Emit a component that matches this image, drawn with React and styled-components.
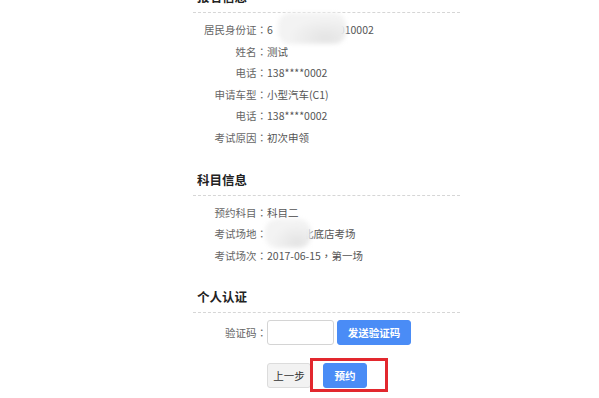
import React from 'react';
import styled, { createGlobalStyle } from 'styled-components';

const GlobalStyle = createGlobalStyle`
  html, body {
    margin: 0;
    padding: 0;
    background: #ffffff;
    overflow: hidden;
  }
  body {
    font-family: "Noto Sans CJK SC", "Noto Sans", "Liberation Sans", sans-serif;
  }
`;

const Page = styled.div`
  width: 267px;
  margin-left: 193px;
  margin-top: -13px;
`;

const Section = styled.section`
  & + & {
    margin-top: 21px;
  }
`;

const Heading = styled.h3`
  margin: 0;
  padding: 0 0 5px 4px;
  font-size: 12.5px;
  line-height: 20px;
  font-weight: bold;
  color: #222;
  border-bottom: 1px dashed #d6d6d6;
`;

const List = styled.div`
  padding-top: 6px;
`;

const Row = styled.div`
  display: grid;
  grid-template-columns: 74px 1fr;
  align-items: center;
  min-height: 21.6px;
  font-size: 10.5px;
  line-height: 21.6px;
`;

const Label = styled.span`
  text-align: right;
  color: #666;
  white-space: nowrap;
`;

// centred full-width punctuation, as in the original font
const Punct = styled.span`
  font-family: "Noto Sans CJK TC", "Noto Sans CJK SC", sans-serif;
`;

const Value = styled.span`
  position: relative;
  color: #555;
  white-space: nowrap;
  padding-left: ${({ $indent }) => $indent || 0}px;
`;

const Gap = styled.span`
  display: inline-block;
  width: ${({ $w }) => $w}px;
`;

const Blur = styled.span`
  position: absolute;
  left: ${({ $left }) => $left}px;
  top: ${({ $top }) => $top}px;
  width: ${({ $w }) => $w}px;
  height: ${({ $h }) => $h}px;
  border-radius: 12px;
  background:
    radial-gradient(ellipse at 70% 80%, #e4e4e4 0%, rgba(232, 232, 232, 0) 55%),
    #f3f3f3;
  filter: blur(2px);
`;

const AuthBody = styled.div`
  padding-top: 7px;
`;

const CodeRow = styled.div`
  display: grid;
  grid-template-columns: 74px 70px auto 1fr;
  align-items: center;
  font-size: 10.5px;
`;

const Input = styled.input`
  box-sizing: border-box;
  width: 67px;
  height: 25px;
  border: 1px solid #d4d4d4;
  border-radius: 3px;
  outline: none;
  padding: 0 4px;
`;

const Button = styled.button`
  box-sizing: border-box;
  height: 25px;
  width: ${({ $w }) => $w}px;
  padding: 0;
  border-radius: 3px;
  font-family: inherit;
  font-size: 10.5px;
  font-weight: ${({ $primary }) => ($primary ? 'bold' : 'normal')};
  cursor: pointer;
  border: 1px solid ${({ $primary }) => ($primary ? '#4a8cf6' : '#dcdcdc')};
  background: ${({ $primary }) => ($primary ? '#4a8cf6' : '#f2f2f2')};
  color: ${({ $primary }) => ($primary ? '#ffffff' : '#333333')};
`;

const Actions = styled.div`
  display: flex;
  align-items: center;
  margin-top: 13px;
  padding-left: 74px;
`;

const Highlight = styled.div`
  display: flex;
  align-items: center;
  margin-left: -1px;
  border: 3px solid #e2282e;
  padding: 2px 18px 1px 10px;
  background: #fff;
`;

const applyRows = [
  ['电话', '138****0002'],
  ['申请车型', '小型汽车(C1)'],
  ['电话', '138****0002'],
  ['考试原因', '初次申领'],
];

const FieldLabel = ({ children }) => (
  <Label>
    {children}
    <Punct>：</Punct>
  </Label>
);

export default function App() {
  return (
    <>
      <GlobalStyle />
      <Page>
        <Section>
          <Heading>报名信息</Heading>
          <List>
            <Row>
              <FieldLabel>居民身份证</FieldLabel>
              <Value>
                6<Gap $w={66} />010002
                <Blur $left={11} $top={-6} $w={68} $h={31} />
              </Value>
            </Row>
            <Row>
              <FieldLabel>姓名</FieldLabel>
              <Value>测试</Value>
            </Row>
            {applyRows.map(([label, value], i) => (
              <Row key={i}>
                <FieldLabel>{label}</FieldLabel>
                <Value>{value}</Value>
              </Row>
            ))}
          </List>
        </Section>

        <Section>
          <Heading>科目信息</Heading>
          <List>
            <Row>
              <FieldLabel>预约科目</FieldLabel>
              <Value>科目二</Value>
            </Row>
            <Row>
              <FieldLabel>考试场地</FieldLabel>
              <Value $indent={36}>
                北底店考场
                <Blur $left={-2} $top={-4} $w={46} $h={29} />
              </Value>
            </Row>
            <Row>
              <FieldLabel>考试场次</FieldLabel>
              <Value>
                2017-06-15<Punct>，</Punct>第一场
              </Value>
            </Row>
          </List>
        </Section>

        <Section>
          <Heading>个人认证</Heading>
          <AuthBody>
            <CodeRow>
              <FieldLabel>验证码</FieldLabel>
              <Input />
              <Button $primary $w={74}>发送验证码</Button>
            </CodeRow>
            <Actions>
              <Button $w={44}>上一步</Button>
              <Highlight>
                <Button $primary $w={44}>预约</Button>
              </Highlight>
            </Actions>
          </AuthBody>
        </Section>
      </Page>
    </>
  );
}
